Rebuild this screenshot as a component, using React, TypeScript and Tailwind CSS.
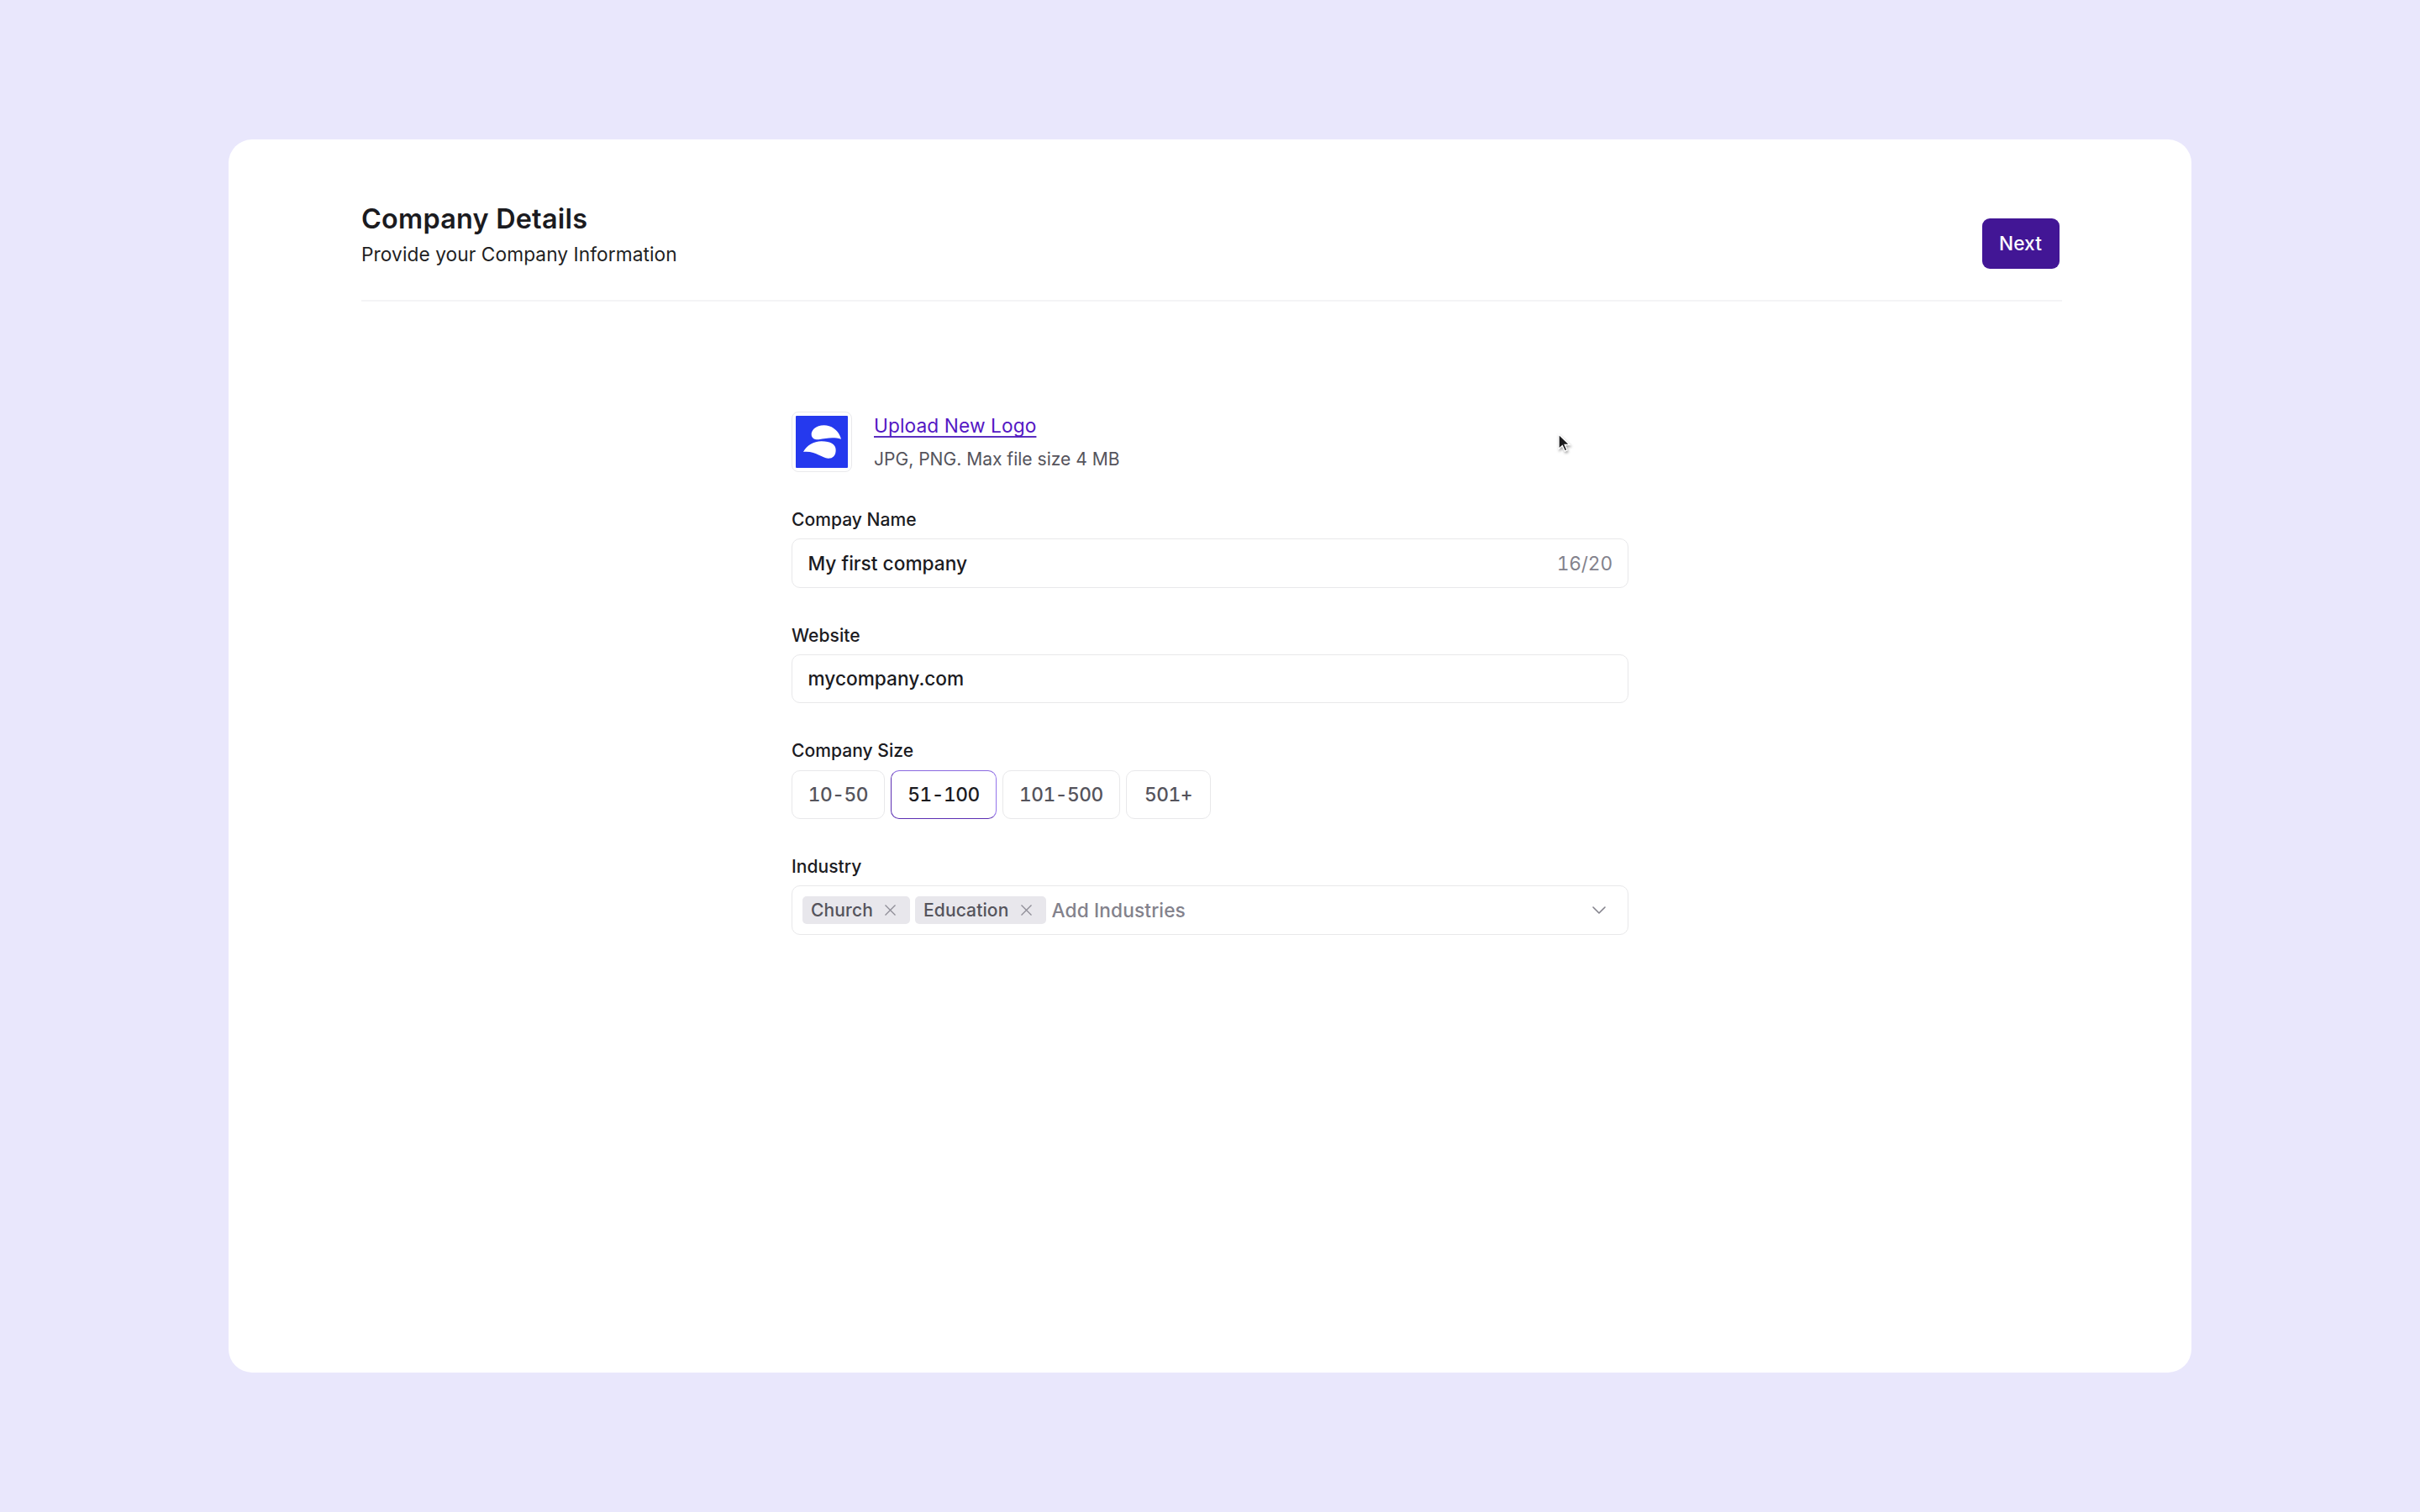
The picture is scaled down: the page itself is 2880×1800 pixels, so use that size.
import type { ReactNode } from "react";

function CompanyLogo() {
  return (
    <div className="flex size-[72px] items-center justify-center rounded-[8px] border border-[#e9e9ec] bg-white">
      <div className="size-[62px] overflow-hidden rounded-[1px] bg-[#2539ee]">
        <svg viewBox="0 0 186 186" className="block size-full" fill="#ffffff">
          <path d="M162 83C155 55 130 34 101 34C73 34 56 50 56 66C56 79 66 86 82 85C108 81 132 75 162 83Z" />
          <path d="M27 129C39 106 64 91 92 91C125 91 143 103 143 122C143 142 133 152 116 152C92 152 74 125 27 129Z" />
        </svg>
      </div>
    </div>
  );
}

function Field({ label, children }: { label: string; children: ReactNode }) {
  return (
    <div className="flex h-[94.66px] flex-col justify-between">
      <div className="text-[21.06px] leading-[28px] font-medium tracking-[0.03px] text-[#1b1b1f]">{label}</div>
      {children}
    </div>
  );
}

function InputBox({ children }: { children: ReactNode }) {
  return (
    <div className="flex h-[58.3px] w-full items-center justify-between rounded-[10px] border border-[#e8e8ea] bg-white pr-[18px] pl-[18.5px] text-[22.7px] leading-8">
      {children}
    </div>
  );
}

const sizes = [
  { label: "10-50", box: "w-[111px]", active: false },
  { label: "51-100", box: "w-[126px]", active: true },
  { label: "101-500", box: "w-[140px]", active: false },
  { label: "501+", box: "w-[101px]", active: false },
];

function Tag({ label, width }: { label: string; width: string }) {
  return (
    <span
      className={`flex h-[33.5px] items-center justify-between rounded-[5px] bg-[#e8e7ec] pr-[17px] pl-[10px] text-[21.06px] font-medium tracking-[0.1px] text-[#55545c] ${width}`}
    >
      <span className="pt-px leading-7">{label}</span>
      <svg viewBox="0 0 13 13" className="size-[13px]" fill="none" stroke="#8d8c96" strokeWidth="1.3">
        <path d="M0.5 0.5L12.5 12.5M12.5 0.5L0.5 12.5" />
      </svg>
    </span>
  );
}

export default function App() {
  return (
    <div className="h-[1800px] w-[2880px] overflow-hidden bg-[#e9e7fc] px-[272px] pt-[166px] font-['Inter',sans-serif]">
      <div className="relative h-[1467.5px] w-[2336px] rounded-[28px] bg-white px-[158px] pt-[74px]">
        <header className="flex h-[119px] w-[2024px] items-start justify-between border-b-2 border-[#f4f4f6]">
          <div>
            <h1 className="text-[32.4px] leading-[42px] font-semibold tracking-[0.22px] text-[#1b1b1f]">Company Details</h1>
            <p className="mt-[5px] text-[22.7px] leading-8 tracking-[0.08px] text-[#1f1f23]">Provide your Company Information</p>
          </div>
          <button className="mt-[20px] mr-[3.5px] h-[59.5px] w-[92px] rounded-[9px] bg-[#421695] text-[22.7px] leading-8 font-medium text-white">
            Next
          </button>
        </header>

        <main className="mt-[131px] ml-[512px] flex w-[996px] flex-col">
          <div className="flex items-center gap-[26px]">
            <CompanyLogo />
            <div className="flex h-[72px] flex-col justify-between pt-px">
              <a className="text-[22.7px] leading-8 tracking-[0.1px] text-[#5417c4] underline decoration-[#5a2fc0] decoration-2 underline-offset-[4px] [text-decoration-skip-ink:none]">
                Upload New Logo
              </a>
              <p className="-mb-px text-[21.06px] leading-8 text-[#55545c]">JPG, PNG. Max file size 4 MB</p>
            </div>
          </div>

          <div className="mt-[43px] flex flex-col gap-[43px]">
            <Field label="Compay Name">
              <InputBox>
                <span className="font-medium text-[#1b1b1f]">My first company</span>
                <span className="tracking-[-0.15px] text-[#83828c] tabular-nums">16/20</span>
              </InputBox>
            </Field>
            <Field label="Website">
              <InputBox>
                <span className="font-medium text-[#1b1b1f]">mycompany.com</span>
              </InputBox>
            </Field>
            <Field label="Company Size">
              <div className="flex gap-[7px] text-[22.7px] leading-8 font-medium tracking-[-0.45px] tabular-nums">
                {sizes.map((s) => (
                  <div
                    key={s.label}
                    className={`flex h-[58.3px] items-center justify-center rounded-[10px] border bg-white ${s.box} ${
                      s.active
                        ? "border-t-[#8a68e0] border-r-[#9474ea] border-b-[#5c30b2] border-l-[#5c30b2] text-[#1b1b1f]"
                        : "border-[#e8e8ea] text-[#55545c]"
                    }`}
                  >
                    {s.label}
                  </div>
                ))}
              </div>
            </Field>
            <Field label="Industry">
              <div className="flex h-[58.3px] w-full items-center rounded-[10px] border border-[#e8e8ea] bg-white pr-[26.5px] pl-[12px]">
                <div className="flex flex-1 items-center gap-[6.5px]">
                  <Tag label="Church" width="w-[127.5px]" />
                  <Tag label="Education" width="w-[155.5px]" />
                  <span className="pt-px pl-[0.5px] text-[22.7px] leading-8 font-medium tracking-[0.12px] text-[#83828c]">Add Industries</span>
                </div>
                <svg viewBox="0 0 16 9" className="h-[9px] w-4" fill="none" stroke="#83828c" strokeWidth="1.6" strokeLinecap="round" strokeLinejoin="round">
                  <path d="M1 1L8 8L15 1" />
                </svg>
              </div>
            </Field>
          </div>
        </main>

        <svg
          viewBox="0 0 18 26"
          className="absolute top-[349px] left-[1581px] h-[26px] w-[18px] drop-shadow-[1px_2px_1.5px_rgba(0,0,0,0.35)]"
        >
          <path d="M2 2V19.5L6.3 15.6L9.3 22L12 20.8L9.2 14.5H15Z" fill="#1c1c1e" stroke="#ffffff" strokeWidth="1.4" />
        </svg>
      </div>
    </div>
  );
}
